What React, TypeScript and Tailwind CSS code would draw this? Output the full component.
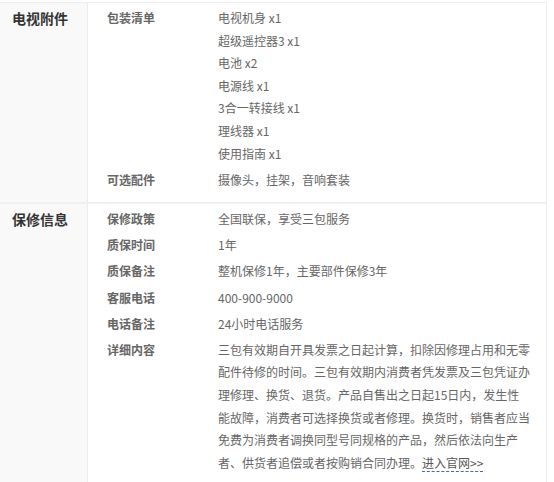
const accessories = [
  {
    label: "包装清单",
    values: ["电视机身 x1", "超级遥控器3 x1", "电池 x2", "电源线 x1", "3合一转接线 x1", "理线器 x1", "使用指南 x1"],
  },
  { label: "可选配件", values: ["摄像头，挂架，音响套装"] },
];

const warranty = [
  { label: "保修政策", values: ["全国联保，享受三包服务"] },
  { label: "质保时间", values: ["1年"] },
  { label: "质保备注", values: ["整机保修1年，主要部件保修3年"] },
  { label: "客服电话", values: ["400-900-9000"] },
  { label: "电话备注", values: ["24小时电话服务"] },
];

// wrapped the way the reference wraps it
const detailLines = [
  "三包有效期自开具发票之日起计算，扣除因修理占用和无零",
  "配件待修的时间。三包有效期内消费者凭发票及三包凭证办",
  "理修理、换货、退货。产品自售出之日起15日内，发生性",
  "能故障，消费者可选择换货或者修理。换货时，销售者应当",
  "免费为消费者调换同型号同规格的产品，然后依法向生产",
];

type Row = { label: string; values: string[] };

function Rows({ rows }: { rows: Row[] }) {
  return (
    <>
      {rows.map((r) => (
        <div key={r.label} className="flex">
          <div className="w-[111px] shrink-0 font-semibold text-[#666]">{r.label}</div>
          <div className="flex flex-col text-[#666]">
            {r.values.map((v) => (
              <span key={v}>{v}</span>
            ))}
          </div>
        </div>
      ))}
    </>
  );
}

function Section({ title, children }: { title: string; children: React.ReactNode }) {
  return (
    <div className="flex">
      <div className="w-[88px] shrink-0 border-r border-[#ececec] bg-[#f9f9f9] pl-3 pt-[4px] text-[14px] font-bold leading-[22px] text-[#333]">
        {title}
      </div>
      <div className="flex flex-1 flex-col gap-[3.5px] pl-[19px] pb-[11px] pt-[4px] text-[12px] leading-[22.6px]">
        {children}
      </div>
    </div>
  );
}

export default function App() {
  return (
    <div
      className="h-[482px] w-[554px] bg-white"
      style={{ fontFamily: '"Microsoft YaHei", "Noto Sans CJK SC", sans-serif' }}
    >
      <div className="mt-[2px] w-[547px] border border-l-0 border-[#eeeeee]">
        <Section title="电视附件">
          <Rows rows={accessories} />
        </Section>
        <div className="border-t-2 border-[#f0f0f0]">
          <Section title="保修信息">
            <Rows rows={warranty} />
            <div className="flex">
              <div className="w-[111px] shrink-0 font-semibold text-[#666]">详细内容</div>
              <div className="flex flex-col whitespace-nowrap text-[#666]">
                {detailLines.map((l) => (
                  <span key={l}>{l}</span>
                ))}
                <span>
                  者、供货者追偿或者按购销合同办理。
                  <a className="border-b border-dashed border-[#4a6a9a] text-[#555]">进入官网&gt;&gt;</a>
                </span>
              </div>
            </div>
          </Section>
        </div>
      </div>
    </div>
  );
}
